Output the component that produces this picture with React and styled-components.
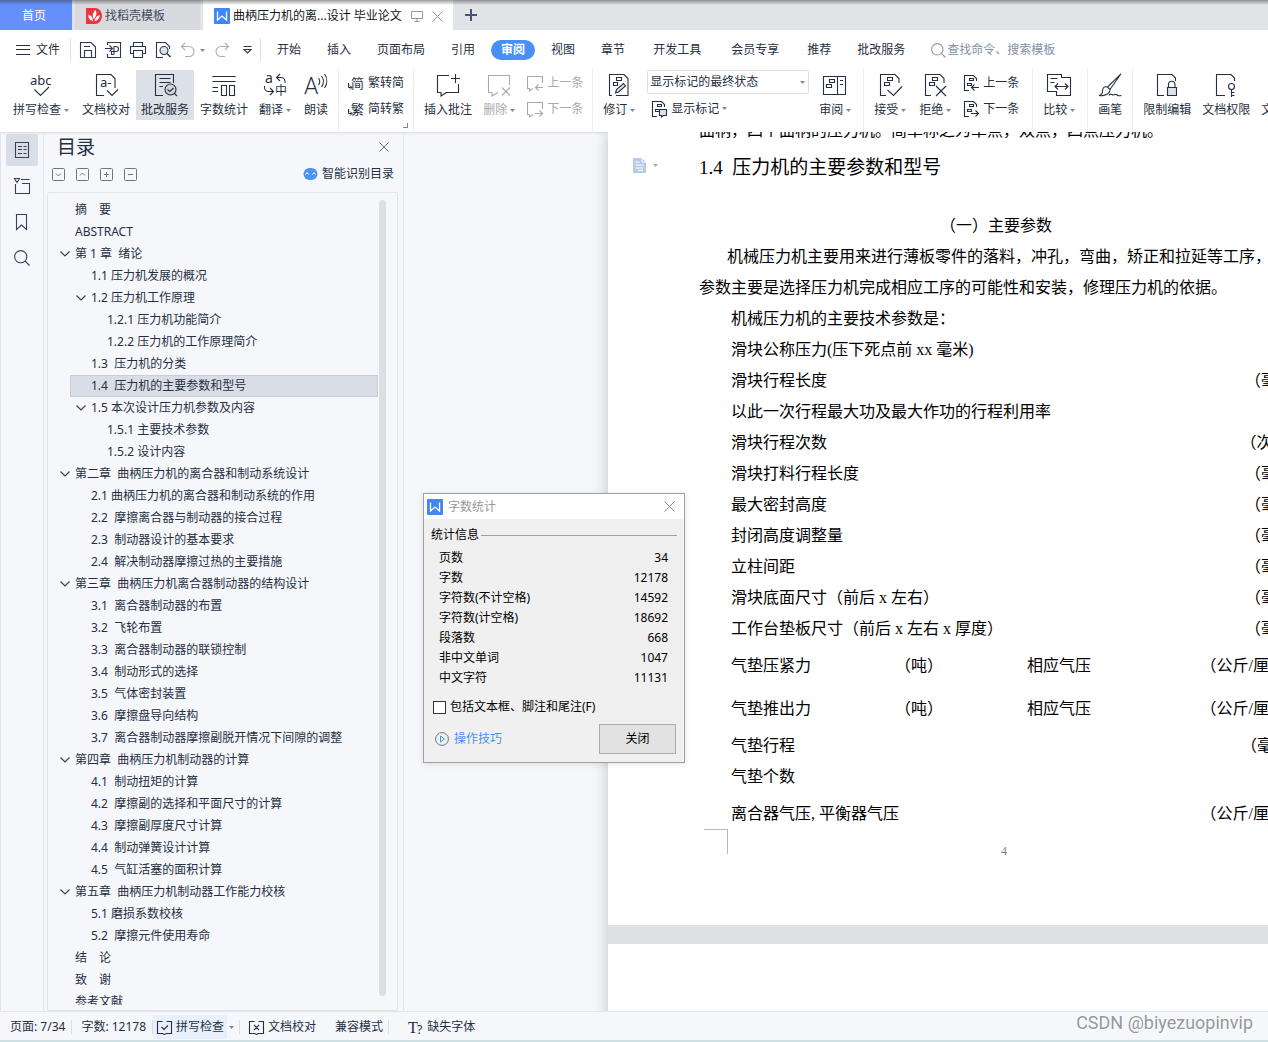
import React, { useState } from 'react';
import styled, { createGlobalStyle } from 'styled-components';

const GlobalStyle = createGlobalStyle`
	* {
		box-sizing: border-box;
	}

	body {
		margin: 0;
		overflow: hidden;
		font-family: "Noto Sans", "Noto Sans CJK SC", sans-serif;
		font-size: 12px;
		line-height: 16px;
		color: #262f42;
	}

	button, input, select {
		font: inherit;
		color: inherit;
	}

	button {
		border: none;
		background: none;
		padding: 0;
		cursor: pointer;
		white-space: nowrap;
	}

	svg {
		display: block;
		flex: none;
		overflow: visible;
	}
`;

const Window = styled.div`
	height: 100vh;
	display: flex;
	flex-direction: column;
	position: relative;
	overflow: hidden;
	background-color: #f5f7fa;
`;

/* ---------- tabs ---------- */

const TabBar = styled.div`
	flex: none;
	height: 30px;
	display: flex;
	gap: 3px;
	position: relative;
	background-color: #e1e3e7;

	&::after {
		content: "";
		position: absolute;
		inset: 0 0 auto 0;
		height: 5px;
		background: linear-gradient(rgba(60, 60, 60, 0.5), rgba(60, 60, 60, 0));
		pointer-events: none;
	}
`;

const Tab = styled.button`
	height: 30px;
	display: flex;
	align-items: center;
	gap: 3px;
	padding: 2px ${props => props.$kind === "template" ? "35px" : "10px"} 0 11px;
	background-color: ${props => props.$kind === "open" ? "#ffffff" : "#d8dade"};
	color: ${props => props.$kind === "open" ? "#111722" : "#414a5c"};
`;

const HomeTab = styled(Tab)`
	width: 72px;
	padding: 2px 4px 0 0;
	justify-content: center;
	background-color: #6590fb;
	color: #ffffff;
`;

const TabTools = styled.span`
	display: flex;
	align-items: center;
	gap: 9px;
	margin-left: 6px;
	color: #8d99b0;
`;

const NewTab = styled.button`
	width: 30px;
	display: flex;
	align-items: center;
	justify-content: center;
	color: #465470;
`;

/* ---------- menu ---------- */

const MenuBar = styled.div`
	flex: none;
	height: 38px;
	display: flex;
	align-items: center;
	padding-top: 2px;
	background-color: #ffffff;
`;

const FileButton = styled.button`
	display: flex;
	align-items: center;
	gap: 6px;
	padding: 0 10px 0 16px;
`;

const Rule = styled.span`
	width: 1px;
	height: ${props => props.$height || 24}px;
	background-color: #dcdfe5;
`;

const QuickTools = styled.div`
	display: flex;
	align-items: center;
	gap: 9px;
	padding: 0 5px 0 9px;
`;

const QuickButton = styled.button`
	display: flex;
	align-items: center;
	gap: 4px;
	color: ${props => props.$off ? "#a9adb5" : "#2c3850"};
`;

const Nav = styled.nav`
	display: flex;
	padding-left: 3px;
`;

const NavItem = styled.button`
	height: 20px;
	padding: 0 10px;
	margin: 0 ${props => props.$wide ? 5 : 3}px;
	border-radius: 10px;
	background-color: ${props => props.$active ? "#4a8ff3" : "transparent"};
	color: ${props => props.$active ? "#ffffff" : "inherit"};
	font-weight: ${props => props.$active ? 700 : 400};
`;

const Search = styled.label`
	flex: 1;
	display: flex;
	align-items: center;
	margin-left: 13px;
	color: #8f9bb0;

	input {
		flex: 1;
		min-width: 0;
		border: none;
		outline: none;
		padding: 0 1px;
		background: none;
	}

	input::placeholder {
		color: #8390a8;
	}
`;

/* ---------- ribbon ---------- */

const Ribbon = styled.div`
	flex: none;
	height: 64px;
	display: flex;
	overflow: hidden;
	background-color: #ffffff;
`;

const Group = styled.div`
	flex: none;
	display: flex;
	align-items: flex-start;
	gap: 1px;
	position: relative;
	padding: 2px ${props => props.$wide ? 9 : 5}px 0 5px;
	border-right: 1px solid #eceef1;

	&:first-child {
		padding-left: 8px;
	}

	&:last-child {
		border-right: none;
	}
`;

const BigButton = styled.button`
	height: 50px;
	display: flex;
	flex-direction: column;
	align-items: center;
	gap: 5px;
	padding: 3px ${props => props.$menu ? 7 : 5}px 2px 5px;
	background-color: ${props => props.$active ? "#dbe1e6" : "transparent"};
	color: ${props => props.disabled ? "#a5a9b1" : "#262f42"};
`;

const Caption = styled.span`
	display: flex;
	align-items: center;
	gap: 3px;
`;

const Stack = styled.div`
	display: flex;
	flex-direction: column;
	gap: 2px;
	padding: ${props => props.$flush ? "0 4px" : "0"};
`;

const SmallButton = styled.button`
	height: 24px;
	display: flex;
	align-items: center;
	gap: 4px;
	padding: 1px 4px 0;
	color: ${props => props.disabled ? "#a5a9b1" : "#262f42"};
`;

const Corner = styled.span`
	position: absolute;
	right: 5px;
	bottom: 4px;
	width: 5px;
	height: 5px;
	border: solid #7d879a;
	border-width: 0 1px 1px 0;
`;

const SelectBox = styled.div`
	position: relative;

	select {
		width: 162px;
		height: 24px;
		padding: 0 20px 0 2px;
		appearance: none;
		border: 1px solid #dcdfe4;
		border-radius: 2px;
		background-color: #ffffff;
	}

	svg {
		position: absolute;
		right: 4px;
		top: 11px;
		pointer-events: none;
	}
`;

/* ---------- workspace ---------- */

const Workspace = styled.div`
	flex: 1;
	min-height: 0;
	display: flex;
	border-left: 1px solid #e1e4e9;
	box-shadow: inset 0 3px 3px -2px rgba(0, 0, 0, 0.12);
`;

const Rail = styled.div`
	flex: none;
	width: 43px;
	display: flex;
	flex-direction: column;
	align-items: center;
	gap: 4px;
	padding-top: 2px;
	border-right: 1px solid #e1e4e9;
`;

const RailButton = styled.button`
	width: 32px;
	height: 32px;
	display: flex;
	align-items: center;
	justify-content: center;
	border-radius: 2px;
	color: #36425c;
	background-color: ${props => props.$active ? "#d9dde5" : "transparent"};
`;

const Outline = styled.aside`
	flex: none;
	width: 360px;
	display: flex;
	flex-direction: column;
	padding: 0 5px 0 3px;
	border-right: 1px solid #e1e4e9;
`;

const OutlineHead = styled.div`
	height: 30px;
	display: flex;
	align-items: center;
	justify-content: space-between;
	padding: 0 9px 0 10px;

	h2 {
		margin: 0;
		font-size: 19px;
		line-height: 30px;
		font-weight: 400;
	}

	button {
		color: #6b7587;
	}
`;

const OutlineTools = styled.div`
	height: 30px;
	display: flex;
	align-items: center;
	gap: 11px;
	padding: 0 4px 6px 5px;
	color: #6b7280;
`;

const SmartButton = styled.button`
	display: flex;
	align-items: center;
	gap: 4px;
	margin-left: auto;
	color: #262f42;
`;

const TreeBox = styled.div`
	flex: 1;
	min-height: 0;
	display: flex;
	padding: 6px 11px 5px 8px;
	border: 1px solid #e1e4e9;
	border-radius: 2px;
`;

const Tree = styled.ul`
	flex: 1;
	margin: 0;
	padding: 0 1px 0 14px;
	list-style: none;
	overflow: hidden;
`;

const TreeItem = styled.li`
	height: 22px;
	display: flex;
	align-items: center;
	white-space: pre;
	border: 1px solid ${props => props.$current ? "#c8ced7" : "transparent"};
	background-color: ${props => props.$current ? "#d9dde5" : "transparent"};
`;

/* holds the arrow at its right end, so deeper levels only get a wider one */
const Twisty = styled.span`
	width: ${props => props.$level * 16 - 12}px;
	display: flex;
	justify-content: flex-end;

	svg {
		margin-right: 5px;
	}
`;

const ScrollThumb = styled.div`
	width: 7px;
	margin: 1px 0 9px;
	border-radius: 4px;
	background-color: #dce0e3;
`;

const Canvas = styled.main`
	flex: 1;
	min-width: 0;
	padding-left: 204px;
	overflow: hidden;
`;

const Papers = styled.div`
	width: 794px;
	display: flex;
	flex-direction: column;
	gap: 19px;
	background-color: #dfe0e2;
	box-shadow: 0 0 14px rgba(0, 0, 0, 0.22);
	color: #000000;
	font-family: "Liberation Serif", "Noto Sans CJK SC", serif;
	font-size: 16px;
	line-height: 31px;
	text-spacing-trim: space-all;
	white-space: pre;
`;

const Paper = styled.article`
	min-height: 120px;
	padding: 0 93px 0 91px;
	background-color: #ffffff;

	/* the first sheet is scrolled a little under the ribbon */
	&:first-child {
		margin-top: -17px;
	}
`;

const Heading = styled.h3`
	position: relative;
	margin: 0 0 20px;
	font-size: 19px;
	line-height: 44px;
	font-weight: 400;
`;

const ParagraphMark = styled.button`
	position: absolute;
	left: -66px;
	top: 12px;
	display: flex;
	align-items: center;
	gap: 6px;
	color: #a3a8b0;
`;

const Line = styled.p`
	margin: 0;
	padding-left: ${props => props.$indent || 0}px;
	text-align: ${props => props.$center ? "center" : "left"};
`;

const Param = styled.div`
	display: grid;
	grid-template-columns: ${props => props.$cols ? "164px 132px 1fr auto" : "1fr auto"};
	padding-left: 32px;
	line-height: ${props => props.$tall ? 43 : 31}px;
`;

const SheetFoot = styled.footer`
	height: 96px;
	display: grid;
	grid-template-columns: 1fr auto 1fr;
	margin-top: -6px;
	font-size: 12px;
	line-height: 44px;
	color: #8f7a68;
`;

const CropMark = styled.span`
	width: 24px;
	height: 25px;
	margin-left: 5px;
	border: solid #b9b9b9;
	border-width: 1px 1px 0 0;
`;

/* ---------- word count dialog ---------- */

const Dialog = styled.section`
	position: absolute;
	left: 423px;
	top: 493px;
	width: 262px;
	border: 1px solid #a0a1a3;
	background-color: #f0f0f0;
	color: #000000;
	box-shadow: 0 1px 6px rgba(0, 0, 0, 0.12);
`;

const DialogTitle = styled.header`
	height: 25px;
	display: flex;
	align-items: center;
	gap: 5px;
	padding: 0 9px 0 3px;
	background-color: #ffffff;
	color: #999999;

	button {
		margin-left: auto;
		color: #8a8a8a;
	}
`;

const DialogBody = styled.div`
	padding: 8px 7px 8px;
`;

const Legend = styled.div`
	display: flex;
	align-items: center;
	gap: 2px;

	&::after {
		content: "";
		flex: 1;
		height: 1px;
		background-color: #a0a0a0;
	}
`;

const Stats = styled.table`
	width: 100%;
	margin-top: 5px;
	border-collapse: collapse;

	th, td {
		height: 20px;
		padding: 0 9px 0 8px;
		font-weight: 400;
		text-align: left;
	}

	td {
		text-align: right;
	}
`;

const Check = styled.label`
	display: flex;
	align-items: center;
	gap: 4px;
	margin: 11px 0 9px 2px;

	input {
		appearance: none;
		width: 13px;
		height: 13px;
		margin: 0;
		border: 1px solid #333333;
		background-color: #ffffff;
	}

	input:checked {
		box-shadow: inset 0 0 0 2px #ffffff;
		background-color: #333333;
	}
`;

const DialogFoot = styled.div`
	display: flex;
	align-items: center;
	justify-content: space-between;
	padding: 0 1px 0 4px;

	a {
		display: flex;
		align-items: center;
		gap: 5px;
		color: #4a90ee;
		text-decoration: none;
	}

	button {
		width: 77px;
		height: 30px;
		border: 1px solid #adadad;
		background-color: #e1e1e1;
	}
`;

/* ---------- status bar ---------- */

const StatusBar = styled.footer`
	flex: none;
	height: 31px;
	display: flex;
	align-items: center;
	padding: 1px 15px 0 10px;
	border-top: 1px solid #e1e4e9;
	border-bottom: 2px solid #cfdfe5;
	background-color: #f5f7fa;
`;

const StatusItem = styled.button`
	height: 24px;
	display: flex;
	align-items: center;
	gap: 4px;
	padding: 1px ${props => props.$right || 0}px 0 ${props => props.$left || 0}px;
	background-color: ${props => props.$active ? "#e8f0fc" : "transparent"};
`;

const Watermark = styled.span`
	margin-left: auto;
	padding-bottom: 7px;
	font-family: Roboto, "Liberation Sans", sans-serif;
	font-size: 18px;
	line-height: 20px;
	color: #96999e;
	text-shadow: 1px 1px 0 #ffffff;
`;

/* ---------- icons ---------- */

const Icon = ({ size = 24, children }) => (
	<svg width={size} height={size} viewBox={`0 0 ${size} ${size}`} fill="none" stroke="currentColor" strokeWidth="1.1" aria-hidden="true">
		{children}
	</svg>
);

const Letter = ({ x, y, size, children, ...rest }) => (
	<text x={x} y={y} fontSize={size} fill="currentColor" stroke="none" {...rest}>{children}</text>
);

const Caret = ({ color = "#7d88a0" }) => (
	<svg width="5" height="3" viewBox="0 0 5 3" aria-hidden="true"><path d="M0 0h5L2.5 3z" fill={color} /></svg>
);

const Cross = ({ size = 10 }) => (
	<Icon size={size}><path d={`M.5.5l${size - 1} ${size - 1}M${size - 0.5}.5L.5 ${size - 0.5}`} strokeWidth="1" /></Icon>
);

const WLogo = () => (
	<svg width="16" height="16" viewBox="0 0 16 16" aria-hidden="true">
		<rect width="16" height="16" rx="1" fill="#3f86f6" />
		<path d="M3.5 3.5V12L8 8l4.5 4V3.5" fill="none" stroke="#ffffff" strokeWidth="1.3" />
	</svg>
);

const DocerLogo = () => (
	<svg width="16" height="16" viewBox="0 0 16 16" aria-hidden="true">
		<path d="M0 0h9a7 8 0 0 1 7 8 7 8 0 0 1-7 8H0z" fill="#ee3340" />
		<path d="M7 13C3 12 2 9 2.5 6.500 5 7.500 7 9.500 7 13zM7.500 11C6 8 7 4 9.500 2 11.500 5.500 10 9 7.500 11zM8.500 13c.5-3 2-5 5-6 .5 3-1.500 5.500-5 6z" fill="#ffffff" />
	</svg>
);

const Magnifier = ({ size = 16 }) => (
	<Icon size={size}>
		<circle cx={size * 0.42} cy={size * 0.42} r={size * 0.38} />
		<path d={`M${size * 0.7} ${size * 0.7}L${size - 0.5} ${size - 0.5}`} />
	</Icon>
);

const quickIcons = {
	save: <path d="M.5 15.5V.5H11l4.500 4.500v10.500zM4.500 15V8.500h7V15M4 4.500h6" />,
	export: <><path d="M2.500 3V.5h13v15h-13V12M0 6.500h7.500M4.500 3.500l3 3-3 3" /><path d="M9 12.500V4.500h2a2.500 2.500 0 0 1 0 5H6.500v3H9" /></>,
	print: <path d="M3.500 4.500v-4h9v4M3.500 11.500h-3v-7h15v7h-3M3.500 8.500h9v7h-9z" />,
	preview: <><path d="M8 15.500H1.500V.5h9l4 4V7" /><circle cx="9" cy="8.500" r="4" fill="#dbe1e6" /><path d="M12 11.500l3.500 3.500" strokeWidth="1.6" /></>,
	undo: <path d="M5 1L1.500 4.500 5 8M1.500 4.500H9a5 5 0 0 1 0 10H5" />,
	redo: <path d="M11 1l3.500 3.500L11 8M14.500 4.500H7a5 5 0 0 0 0 10h4" />,
	more: <path d="M4.500 4.500h8M5 7.500h7L8.500 11z" />,
};

const DocCorner = <path d="M8 22.500H2.500v-21H17l4 4V10" />;
const DocMarks = <path d="M9.500 4.500h5v3h-5zM6.500 9.500h5v3h-5z" />;
const Bubble = <path d="M13 2.500H1.500v17H5V23l5.500-3.500M9.500 19.500h13V11" />;
const SmallBubble = <path d="M15.500 8V1.500H.5v12h2V16L6 13.500" />;
const SmallDoc = <path d="M6 15.500H1.500V.5h9l3 3V6M6.500 3.500h4v2h-4zM4.500 8.500h4v2h-4z" />;
const ArrowLeft = <path d="M16 12.500H8.500M11.500 9.500l-3 3 3 3" />;
const ArrowRight = <path d="M8 12.500h7.500M12.500 9.500l3 3-3 3" />;
const Turn = <path d="M.5 8v4.500H4M2 10.500l2 2-2 2" strokeWidth="1" />;

const icons = {
	spell: <><Letter x="1" y="12" size="13">abc</Letter><path d="M5.500 16.500l6 6 8.500-8.500" /></>,
	proof: <><path d="M10 22.500H2.500v-21H17l4 4V15M13 17.500l5 5 6-6" /><Letter x="6" y="14" size="13">a-</Letter></>,
	service: (
		<>
			<path d="M10 22.500H2.500v-21h18V10M6.500 5.500h11M6.500 9.500h11M6.500 13.500H10" />
			<circle cx="17.500" cy="16.500" r="5.500" fill="#ccd5de" />
			<path d="M14.500 16.500l2.500 2 3.500-3.500M21.500 20.500L24 23" />
		</>
	),
	count: <path d="M.5 3.500h23M.5 8.500h23M.5 14.500H6M.5 18.500H6M9.500 12.500h5v10h-5zM17.500 12.500h5v10h-5z" />,
	translate: (
		<>
			<Letter x="2" y="10" size="14">a</Letter>
			<Letter x="12" y="22" size="12">中</Letter>
			<path d="M17 1L13.500 4.500 17 8M13.500 4.500H18a4 4 0 0 1 4 4V10M1.500 13v1.500a4 4 0 0 0 4 4H10M7 15l3.500 3.500L7 22" />
		</>
	),
	read: (
		<>
			<Letter x="0" y="21" size="23" fontFamily="Roboto" fontWeight="300">A</Letter>
			<path d="M14.500 5a6 6 0 0 1 0 7M17.500 3a9 9 0 0 1 0 11M20.500 1a12 12 0 0 1 0 14" />
		</>
	),
	addNote: <>{Bubble}<path d="M19.500 1v9M15 5.500h9" /></>,
	delNote: <path d="M11 19.500L5 23v-3.500H1.500v-17h21V12M15 14.500l8 8M23 14.500l-8 8" />,
	revise: (
		<>
			<path d="M5 22.500H2.500v-21H17l4 4v17H9" />
			<path d="M9.500 4.500h5v3h-5zM6.500 9.500h4v3h-4z" />
			<path d="M8.500 20l1-3.500 7-6 2 2.500-7 6z" fill="#dbe1e6" />
		</>
	),
	pane: <><path d="M.5 3.500h14v18H.5zM14.500 3.500h8v18h-8zM17 7.500h3M17 11.500h3" /><path d="M6.500 6.500h5v3h-5zM3.500 11.500h5v3h-5z" /></>,
	accept: <>{DocCorner}{DocMarks}<path d="M9.500 17l6 5.500 8.500-9" /></>,
	reject: <>{DocCorner}{DocMarks}<path d="M13 13l10 10M23 13L13 23" /></>,
	compare: <path d="M10 18.500H.5v-17h14v3h9v18h-14v-4M3.500 5.500h7M3.500 9.500h4M8 13.500h12.500M11 10.500l-3 3 3 3M18 10.500l3 3-3 3" />,
	pen: (
		<>
			<path d="M23 .8L9.500 14l2.500 2.500zM9.500 14c-3-1-5 .5-5 4 0 2-1.500 4-3.500 4.500 5 1 11-1.500 11-6z" />
			<path d="M11 22.500c1.500-3 3 0 4.500-.5s2-1.500 3.500 0 2.500.5 4.500.5" />
		</>
	),
	lock: <><path d="M9 22.500H2.500v-21H17L20.500 5v3" /><path d="M13.500 14v-2.500a3 3 0 0 1 6.500 0V14" /><path d="M12.500 14.500h9v8h-9z" fill="#dbe1e6" /></>,
	key: <><path d="M11 22.500H2.500v-21H17L20.500 5v3" /><circle cx="17.500" cy="13.500" r="3" /><path d="M17.500 16.500V24M17.500 19.500h3M17.500 22.500h3" /></>,
	toSimple: <><Letter x="3" y="13" size="13">简</Letter>{Turn}</>,
	toTrad: <><Letter x="3" y="13" size="13">繁</Letter>{Turn}</>,
	prevNote: <>{SmallBubble}{ArrowLeft}</>,
	nextNote: <>{SmallBubble}{ArrowRight}</>,
	prevEdit: <>{SmallDoc}{ArrowLeft}</>,
	nextEdit: <>{SmallDoc}{ArrowRight}</>,
	marks: <>{SmallDoc}<path d="M8.500 8.500h7v6h-3l-2 1.500v-1.500h-2z" fill="#dbe1e6" /></>,
};

const railIcons = [
	["目录", "M1.500 .5h13v15h-13zM4 4.500h4M4 7.500h4M4 11.500h4M9.500 4.500h3M9.500 7.500h3M9.500 11.500h3"],
	["章节", "M1.500 6v9.500h14v-10H8M7 1.500h8.500M.5 .5h5l-2.500 4z"],
	["书签", "M2.500 .5h10v15l-5-4.500-5 4.500z"],
];

const treeTools = [
	["展开", "M4 5.500L6.500 8 9 5.500"],
	["收起", "M4 7.500L6.500 5 9 7.500"],
	["升级", "M6.500 4v5M4 6.500h5"],
	["降级", "M4 6.500h5"],
];

/* ---------- data ---------- */

const menus = [
	{ name: "开始" },
	{ name: "插入" },
	{ name: "页面布局" },
	{ name: "引用" },
	{ name: "审阅" },
	{ name: "视图" },
	{ name: "章节" },
	{ name: "开发工具", wide: true },
	{ name: "会员专享", wide: true },
	{ name: "推荐" },
	{ name: "批改服务" },
];

// level, title, has children
const toc = [
	[1, "摘　要"],
	[1, "ABSTRACT"],
	[1, "第 1 章  绪论", true],
	[2, "1.1 压力机发展的概况"],
	[2, "1.2 压力机工作原理", true],
	[3, "1.2.1 压力机功能简介"],
	[3, "1.2.2 压力机的工作原理简介"],
	[2, "1.3  压力机的分类"],
	[2, "1.4  压力机的主要参数和型号"],
	[2, "1.5 本次设计压力机参数及内容", true],
	[3, "1.5.1 主要技术参数"],
	[3, "1.5.2 设计内容"],
	[1, "第二章  曲柄压力机的离合器和制动系统设计", true],
	[2, "2.1 曲柄压力机的离合器和制动系统的作用"],
	[2, "2.2  摩擦离合器与制动器的接合过程"],
	[2, "2.3  制动器设计的基本要求"],
	[2, "2.4  解决制动器摩擦过热的主要措施"],
	[1, "第三章  曲柄压力机离合器制动器的结构设计", true],
	[2, "3.1  离合器制动器的布置"],
	[2, "3.2  飞轮布置"],
	[2, "3.3  离合器制动器的联锁控制"],
	[2, "3.4  制动形式的选择"],
	[2, "3.5  气体密封装置"],
	[2, "3.6  摩擦盘导向结构"],
	[2, "3.7  离合器制动器摩擦副脱开情况下间隙的调整"],
	[1, "第四章  曲柄压力机制动器的计算", true],
	[2, "4.1  制动扭矩的计算"],
	[2, "4.2  摩擦副的选择和平面尺寸的计算"],
	[2, "4.3  摩擦副厚度尺寸计算"],
	[2, "4.4  制动弹簧设计计算"],
	[2, "4.5  气缸活塞的面积计算"],
	[1, "第五章  曲柄压力机制动器工作能力校核", true],
	[2, "5.1 磨损系数校核"],
	[2, "5.2  摩擦元件使用寿命"],
	[1, "结　论"],
	[1, "致　谢"],
	[1, "参考文献"],
];

const params = [
	{ cells: ["滑块公称压力(压下死点前 xx 毫米)"] },
	{ cells: ["滑块行程长度", "（毫米）"] },
	{ cells: ["以此一次行程最大功及最大作功的行程利用率"] },
	{ cells: ["滑块行程次数", "（次/分）"] },
	{ cells: ["滑块打料行程长度", "（毫米）"] },
	{ cells: ["最大密封高度", "（毫米）"] },
	{ cells: ["封闭高度调整量", "（毫米）"] },
	{ cells: ["立柱间距", "（毫米）"] },
	{ cells: ["滑块底面尺寸（前后 x 左右）", "（毫米）"] },
	{ cells: ["工作台垫板尺寸（前后 x 左右 x 厚度）", "（毫米）"] },
	{ cells: ["气垫压紧力", "（吨）", "相应气压", "（公斤/厘米2）"], tall: true },
	{ cells: ["气垫推出力", "（吨）", "相应气压", "（公斤/厘米2）"], tall: true },
	{ cells: ["气垫行程", "（毫米 ）"] },
	{ cells: ["气垫个数"] },
	{ cells: ["离合器气压, 平衡器气压", "（公斤/厘米2）"], tall: true },
];

const stats = [
	["页数", 34],
	["字数", 12178],
	["字符数(不计空格)", 14592],
	["字符数(计空格)", 18692],
	["段落数", 668],
	["非中文单词", 1047],
	["中文字符", 11131],
];

/* ---------- parts ---------- */

const Tool = ({ icon, label, menu, active, disabled }) => (
	<BigButton $menu={menu} $active={active} disabled={disabled}>
		<Icon>{icons[icon]}</Icon>
		<Caption>{label}{menu && <Caret />}</Caption>
	</BigButton>
);

const SmallTool = ({ icon, label, menu, disabled }) => (
	<SmallButton disabled={disabled}>
		<Icon size={16}>{icons[icon]}</Icon>
		<Caption>{label}{menu && <Caret />}</Caption>
	</SmallButton>
);

const ReviewRibbon = () => (
	<Ribbon>
		<Group>
			<Tool icon="spell" label="拼写检查" menu />
			<Tool icon="proof" label="文档校对" />
			<Tool icon="service" label="批改服务" active />
			<Tool icon="count" label="字数统计" />
			<Tool icon="translate" label="翻译" menu />
			<Tool icon="read" label="朗读" />
		</Group>
		<Group>
			<Stack>
				<SmallTool icon="toSimple" label="繁转简" />
				<SmallTool icon="toTrad" label="简转繁" />
			</Stack>
			<Corner />
		</Group>
		<Group>
			<Tool icon="addNote" label="插入批注" />
			<Tool icon="delNote" label="删除" menu disabled />
			<Stack>
				<SmallTool icon="prevNote" label="上一条" disabled />
				<SmallTool icon="nextNote" label="下一条" disabled />
			</Stack>
		</Group>
		<Group>
			<Tool icon="revise" label="修订" menu />
			<Stack $flush>
				<SelectBox>
					<select aria-label="显示标记的最终状态">
						<option>显示标记的最终状态</option>
						<option>最终状态</option>
						<option>原始状态</option>
					</select>
					<Caret />
				</SelectBox>
				<SmallTool icon="marks" label="显示标记" menu />
			</Stack>
			<Tool icon="pane" label="审阅" menu />
		</Group>
		<Group $wide>
			<Tool icon="accept" label="接受" menu />
			<Tool icon="reject" label="拒绝" menu />
			<Stack>
				<SmallTool icon="prevEdit" label="上一条" />
				<SmallTool icon="nextEdit" label="下一条" />
			</Stack>
		</Group>
		<Group>
			<Tool icon="compare" label="比较" menu />
		</Group>
		<Group>
			<Tool icon="pen" label="画笔" />
		</Group>
		<Group>
			<Tool icon="lock" label="限制编辑" />
			<Tool icon="key" label="文档权限" />
			<Tool icon="lock" label="文档认证" />
		</Group>
	</Ribbon>
);

const OutlinePanel = () => {
	const [current, setCurrent] = useState(8);

	return (
		<Outline>
			<OutlineHead>
				<h2>目录</h2>
				<button aria-label="关闭目录"><Cross /></button>
			</OutlineHead>
			<OutlineTools>
				{treeTools.map(([name, d]) => (
					<QuickButton key={name} aria-label={name}>
						<svg width="13" height="13" viewBox="0 0 13 13" fill="none" stroke="#6f7683">
							<rect x=".5" y=".5" width="12" height="12" rx="1" />
							<path d={d} />
						</svg>
					</QuickButton>
				))}
				<SmartButton>
					<svg width="15" height="12" viewBox="0 0 15 12" aria-hidden="true">
						<rect x=".5" width="14" height="12" rx="6" fill="#4a93f2" />
						<path d="M2.5 6.500l1.500-2 1.500 2M9.500 6.500l1.500-2 1.500 2" fill="none" stroke="#ffffff" />
					</svg>
					智能识别目录
				</SmartButton>
			</OutlineTools>
			<TreeBox>
				<Tree>
					{toc.map(([level, title, parent], i) => (
						<TreeItem key={title} $current={i === current} onClick={() => setCurrent(i)}>
							<Twisty $level={level}>
								{parent && (
									<svg width="10" height="6" viewBox="0 0 10 6" fill="none" stroke="#36425c" strokeWidth="1.2"><path d="M.5 .5L5 5 9.500 .5" /></svg>
								)}
							</Twisty>
							{title}
						</TreeItem>
					))}
				</Tree>
				<ScrollThumb />
			</TreeBox>
		</Outline>
	);
};

const WordCount = () => (
	<Dialog role="dialog" aria-label="字数统计">
		<DialogTitle>
			<WLogo />
			字数统计
			<button aria-label="关闭"><Cross size={11} /></button>
		</DialogTitle>
		<DialogBody>
			<Legend>统计信息</Legend>
			<Stats>
				<tbody>
					{stats.map(([name, value]) => (
						<tr key={name}>
							<th scope="row">{name}</th>
							<td>{value}</td>
						</tr>
					))}
				</tbody>
			</Stats>
			<Check>
				<input type="checkbox" />
				包括文本框、脚注和尾注(F)
			</Check>
			<DialogFoot>
				<a href="#tips">
					<svg width="14" height="14" viewBox="0 0 14 14" fill="none" aria-hidden="true">
						<circle cx="7" cy="7" r="6.4" stroke="#6b7587" />
						<path d="M5.5 4v6l4-3z" stroke="#4a90ee" />
					</svg>
					操作技巧
				</a>
				<button>关闭</button>
			</DialogFoot>
		</DialogBody>
	</Dialog>
);

const App = () => {
	const [menu, setMenu] = useState("审阅");

	return (
		<Window>
			<GlobalStyle />
			<TabBar>
				<HomeTab>首页</HomeTab>
				<Tab $kind="template"><DocerLogo />找稻壳模板</Tab>
				<Tab $kind="open">
					<WLogo />
					曲柄压力机的离...设计 毕业论文
					<TabTools>
						<Icon size={12}><path d="M.5 1.500h11v7H.5zM6 8.500V11M3.500 11.500h5" strokeWidth="1" /></Icon>
						<Cross size={11} />
					</TabTools>
				</Tab>
				<NewTab aria-label="新建"><Icon size={12}><path d="M6 0v12M0 6h12" strokeWidth="2" /></Icon></NewTab>
			</TabBar>

			<MenuBar>
				<FileButton>
					<Icon size={14}><path d="M0 2.500h14M0 6.500h14M0 11.500h14" strokeWidth="1" /></Icon>
					文件
				</FileButton>
				<Rule />
				<QuickTools>
					<QuickButton aria-label="保存"><Icon size={16}>{quickIcons.save}</Icon></QuickButton>
					<QuickButton aria-label="输出"><Icon size={16}>{quickIcons.export}</Icon></QuickButton>
					<QuickButton aria-label="打印"><Icon size={16}>{quickIcons.print}</Icon></QuickButton>
					<QuickButton aria-label="打印预览"><Icon size={16}>{quickIcons.preview}</Icon></QuickButton>
					<QuickButton aria-label="撤销" $off><Icon size={16}>{quickIcons.undo}</Icon><Caret /></QuickButton>
					<QuickButton aria-label="恢复" $off><Icon size={16}>{quickIcons.redo}</Icon></QuickButton>
					<QuickButton aria-label="更多"><Icon size={16}>{quickIcons.more}</Icon></QuickButton>
				</QuickTools>
				<Rule />
				<Nav>
					{menus.map((item) => (
						<NavItem key={item.name} $wide={item.wide} $active={item.name === menu} onClick={() => setMenu(item.name)}>
							{item.name}
						</NavItem>
					))}
				</Nav>
				<Search>
					<Magnifier size={15} />
					<input type="text" placeholder="查找命令、搜索模板" aria-label="查找命令、搜索模板" />
				</Search>
			</MenuBar>

			<ReviewRibbon />

			<Workspace>
				<Rail>
					{railIcons.map(([name, d], i) => (
						<RailButton key={name} aria-label={name} $active={i === 0}><Icon size={16}><path d={d} /></Icon></RailButton>
					))}
					<RailButton aria-label="查找"><Magnifier size={16} /></RailButton>
				</Rail>
				<OutlinePanel />
				<Canvas>
					<Papers>
						<Paper>
							<Line>曲柄，四个曲柄的压力机。简单称之为单点，双点，四点压力机。</Line>
							<Heading>
								<ParagraphMark aria-label="段落布局">
									<svg width="14" height="15" viewBox="0 0 14 15" aria-hidden="true">
										<path d="M0 0h9l4 4v11H0z" fill="#b7cae8" />
										<path d="M9 0v4h4M2.500 4h4M2.500 7h8M2.500 10h8M5 12.500h5" fill="none" stroke="#ffffff" />
									</svg>
									<Caret color="#a3a8b0" />
								</ParagraphMark>
								1.4  压力机的主要参数和型号
							</Heading>
							<Line $center>（一）主要参数　</Line>
							<Line $indent={28}>机械压力机主要用来进行薄板零件的落料，冲孔，弯曲，矫正和拉延等工序，</Line>
							<Line>参数主要是选择压力机完成相应工序的可能性和安装，修理压力机的依据。</Line>
							<Line $indent={32}>机械压力机的主要技术参数是：</Line>
							{params.map(({ cells, tall }) => (
								<Param key={cells[0]} $tall={tall} $cols={cells.length === 4}>
									{cells.map((cell, i) => <span key={i}>{cell}</span>)}
								</Param>
							))}
							<SheetFoot>
								<CropMark />
								<span>4</span>
							</SheetFoot>
						</Paper>
						<Paper />
					</Papers>
				</Canvas>
			</Workspace>

			<StatusBar>
				<StatusItem $right={6}>页面: 7/34</StatusItem>
				<Rule $height={14} />
				<StatusItem $left={9} $right={6}>字数: 12178</StatusItem>
				<Rule $height={14} />
				<StatusItem $active $left={4} $right={3}>
					<Icon size={15}><path d="M5.500 1.500h-5v12h5l2 1 2-1h5v-12h-5M4.500 7L7 9.500l4-4" /></Icon>
					拼写检查
				</StatusItem>
				<StatusItem $left={2} $right={5} aria-label="拼写检查选项"><Caret /></StatusItem>
				<Rule $height={14} />
				<StatusItem $left={9} $right={19}>
					<Icon size={15}><path d="M5.500 1.500h-5v12h5l2 1 2-1h5v-12h-5M5 5l5 5M10 5l-5 5" /></Icon>
					文档校对
				</StatusItem>
				<StatusItem $right={5}>兼容模式</StatusItem>
				<Rule $height={14} />
				<StatusItem $left={19}>
					<Icon size={15}>
						<Letter x="0" y="13" size="16" fontFamily="Liberation Serif">T</Letter>
						<Letter x="9" y="14" size="12">?</Letter>
					</Icon>
					缺失字体
				</StatusItem>
				<Watermark>CSDN @biyezuopinvip</Watermark>
			</StatusBar>

			<WordCount />
		</Window>
	);
};

export default App;
